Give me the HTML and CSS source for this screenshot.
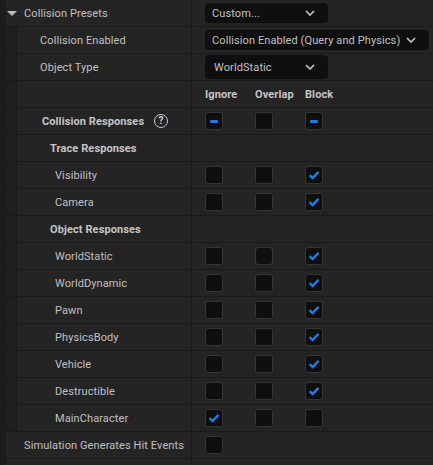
FILE: index.html
```html
<!DOCTYPE html>
<html>
<head>
<meta charset="utf-8">
<link rel="stylesheet" href="styles.css">
</head>
<body>
<div class="panel">
  <div class="row">
    <div class="left"><div class="gutter"></div><div class="label top"><span class="arrow"></span>Collision Presets</div></div>
    <div class="val"><div class="combo short">Custom...<svg class="chev" viewBox="0 0 10 6"><path d="M1 1 L5 5 L9 1"/></svg></div></div>
  </div>
  <div class="row">
    <div class="left"><div class="gutter"></div><div class="indent"></div><div class="label l1">Collision Enabled</div></div>
    <div class="val"><div class="combo long">Collision Enabled (Query and Physics)<svg class="chev" viewBox="0 0 10 6"><path d="M1 1 L5 5 L9 1"/></svg></div></div>
  </div>
  <div class="row">
    <div class="left"><div class="gutter"></div><div class="indent"></div><div class="label l1">Object Type</div></div>
    <div class="val"><div class="combo short tall ws">WorldStatic<svg class="chev" viewBox="0 0 10 6"><path d="M1 1 L5 5 L9 1"/></svg></div></div>
  </div>
  <div class="row">
    <div class="left"><div class="gutter"></div><div class="indent"></div><div class="label l1"></div></div>
    <div class="val grid3"><span class="hd">Ignore</span><span class="hd">Overlap</span><span class="hd">Block</span></div>
  </div>
  <div class="row">
    <div class="left"><div class="gutter"></div><div class="indent"></div><div class="label l2 bold">Collision Responses<span class="help">?</span></div></div>
    <div class="val grid3"><span class="cb"><i class="minus"></i></span><span class="cb"></span><span class="cb"><i class="minus"></i></span></div>
  </div>
  <div class="row">
    <div class="left"><div class="gutter"></div><div class="indent"></div><div class="label l3 bold">Trace Responses</div></div>
    <div class="val"></div>
  </div>
  <div class="row">
    <div class="left"><div class="gutter"></div><div class="indent"></div><div class="label l4">Visibility</div></div>
    <div class="val grid3"><span class="cb"></span><span class="cb"></span><span class="cb on"><svg viewBox="0 0 12 10"><path d="M1.5 5.2 L4.6 8 L10.5 1.8"/></svg></span></div>
  </div>
  <div class="row">
    <div class="left"><div class="gutter"></div><div class="indent"></div><div class="label l4">Camera</div></div>
    <div class="val grid3"><span class="cb"></span><span class="cb"></span><span class="cb on"><svg viewBox="0 0 12 10"><path d="M1.5 5.2 L4.6 8 L10.5 1.8"/></svg></span></div>
  </div>
  <div class="row">
    <div class="left"><div class="gutter"></div><div class="indent"></div><div class="label l3 bold">Object Responses</div></div>
    <div class="val"></div>
  </div>
  <div class="row">
    <div class="left"><div class="gutter"></div><div class="indent"></div><div class="label l4">WorldStatic</div></div>
    <div class="val grid3"><span class="cb"></span><span class="cb"></span><span class="cb on"><svg viewBox="0 0 12 10"><path d="M1.5 5.2 L4.6 8 L10.5 1.8"/></svg></span></div>
  </div>
  <div class="row">
    <div class="left"><div class="gutter"></div><div class="indent"></div><div class="label l4">WorldDynamic</div></div>
    <div class="val grid3"><span class="cb"></span><span class="cb"></span><span class="cb on"><svg viewBox="0 0 12 10"><path d="M1.5 5.2 L4.6 8 L10.5 1.8"/></svg></span></div>
  </div>
  <div class="row">
    <div class="left"><div class="gutter"></div><div class="indent"></div><div class="label l4">Pawn</div></div>
    <div class="val grid3"><span class="cb"></span><span class="cb"></span><span class="cb on"><svg viewBox="0 0 12 10"><path d="M1.5 5.2 L4.6 8 L10.5 1.8"/></svg></span></div>
  </div>
  <div class="row">
    <div class="left"><div class="gutter"></div><div class="indent"></div><div class="label l4">PhysicsBody</div></div>
    <div class="val grid3"><span class="cb"></span><span class="cb"></span><span class="cb on"><svg viewBox="0 0 12 10"><path d="M1.5 5.2 L4.6 8 L10.5 1.8"/></svg></span></div>
  </div>
  <div class="row">
    <div class="left"><div class="gutter"></div><div class="indent"></div><div class="label l4">Vehicle</div></div>
    <div class="val grid3"><span class="cb"></span><span class="cb"></span><span class="cb on"><svg viewBox="0 0 12 10"><path d="M1.5 5.2 L4.6 8 L10.5 1.8"/></svg></span></div>
  </div>
  <div class="row">
    <div class="left"><div class="gutter"></div><div class="indent"></div><div class="label l4">Destructible</div></div>
    <div class="val grid3"><span class="cb"></span><span class="cb"></span><span class="cb on"><svg viewBox="0 0 12 10"><path d="M1.5 5.2 L4.6 8 L10.5 1.8"/></svg></span></div>
  </div>
  <div class="row">
    <div class="left"><div class="gutter"></div><div class="indent"></div><div class="label l4">MainCharacter</div></div>
    <div class="val grid3"><span class="cb on"><svg viewBox="0 0 12 10"><path d="M1.5 5.2 L4.6 8 L10.5 1.8"/></svg></span><span class="cb"></span><span class="cb"></span></div>
  </div>
  <div class="row">
    <div class="left"><div class="gutter"></div><div class="label top">Simulation Generates Hit Events</div></div>
    <div class="val grid3"><span class="cb"></span></div>
  </div>
  <div class="row">
    <div class="left"><div class="gutter"></div><div class="label top"></div></div>
    <div class="val"><div class="stub"></div></div>
  </div>
</div>
</body>
</html>
```
FILE: styles.css
```css
* { box-sizing: border-box; }
html, body { margin: 0; padding: 0; background: #1a1a1a; }
body {
  font-family: Roboto, "Liberation Sans", sans-serif;
  font-size: 11px;
  letter-spacing: 0.1px;
  color: #c0c0c0;
  overflow: hidden;
}
.panel { width: 433px; }
.row {
  display: flex;
  height: 27px;
  border-bottom: 1px solid #1a1a1a;
  background: #242424;
}
.left {
  width: 192px;
  display: flex;
  flex: 0 0 192px;
  border-right: 1px solid #1a1a1a;
}
.gutter {
  width: 6px;
  flex: 0 0 6px;
  background: #1c1c1c;
  border-right: 1px solid #1a1a1a;
}
.indent {
  width: 11px;
  flex: 0 0 11px;
  background: #1f1f1f;
  border-right: 1px solid #1a1a1a;
}
.label {
  flex: 1;
  display: flex;
  align-items: center;
  white-space: nowrap;
}
.label.top { padding-left: 18px; position: relative; }
.label.l1 { padding-left: 23px; }
.label.l2 { padding-left: 25px; }
.label.l3 { padding-left: 33px; }
.label.l4 { padding-left: 38px; }
.bold { font-weight: 700; color: #c4c4c4; }
.arrow {
  position: absolute;
  left: 1px;
  top: 11px;
  width: 0; height: 0;
  border-left: 5px solid transparent;
  border-right: 5px solid transparent;
  border-top: 5px solid #bdbdbd;
}
.help {
  display: inline-flex;
  align-items: center;
  justify-content: center;
  width: 14px; height: 14px;
  margin-left: 10px;
  border: 1.5px solid #c8c8c8;
  border-radius: 50%;
  font-size: 10px;
  font-weight: 700;
  color: #d0d0d0;
  line-height: 1;
}
.val {
  flex: 1;
  display: flex;
  align-items: center;
  padding-left: 13px;
}
.combo {
  display: flex;
  align-items: center;
  height: 20px;
  background: #0f0f0f;
  border-radius: 4px;
  padding-left: 7px;
  padding-right: 8px;
  color: #c0c0c0;
  white-space: nowrap;
}
.combo.short { width: 123px; justify-content: space-between; padding-right: 13px; }
.combo.long { width: 224px; }
.combo.long .chev { margin-left: 6px; }
.combo.tall { height: 24px; }
.combo.ws { padding-left: 9px; }
.chev {
  width: 10px; height: 6px;
  fill: none;
  stroke: #c8c8c8;
  stroke-width: 1.6;
}
.grid3 {
  display: grid;
  grid-template-columns: 50px 50px 50px;
  align-items: center;
  padding-left: 13px;
}
.hd { font-weight: 700; color: #c4c4c4; }
.cb {
  width: 18px; height: 18px;
  background: #0f0f0f;
  border: 1px solid #353535;
  border-radius: 3px;
  display: flex;
  align-items: center;
  justify-content: center;
}
.cb svg {
  width: 12px; height: 10px;
  fill: none;
  stroke: #1a7ce6;
  stroke-width: 2.4;
}
.minus {
  display: block;
  width: 8px; height: 3px;
  background: #1a7ce6;
  border-radius: 1px;
}
.stub {
  align-self: flex-end;
  width: 60px;
  height: 3px;
  background: #2c2c2c;
  border-radius: 3px 3px 0 0;
  margin-bottom: -1px;
}
```
